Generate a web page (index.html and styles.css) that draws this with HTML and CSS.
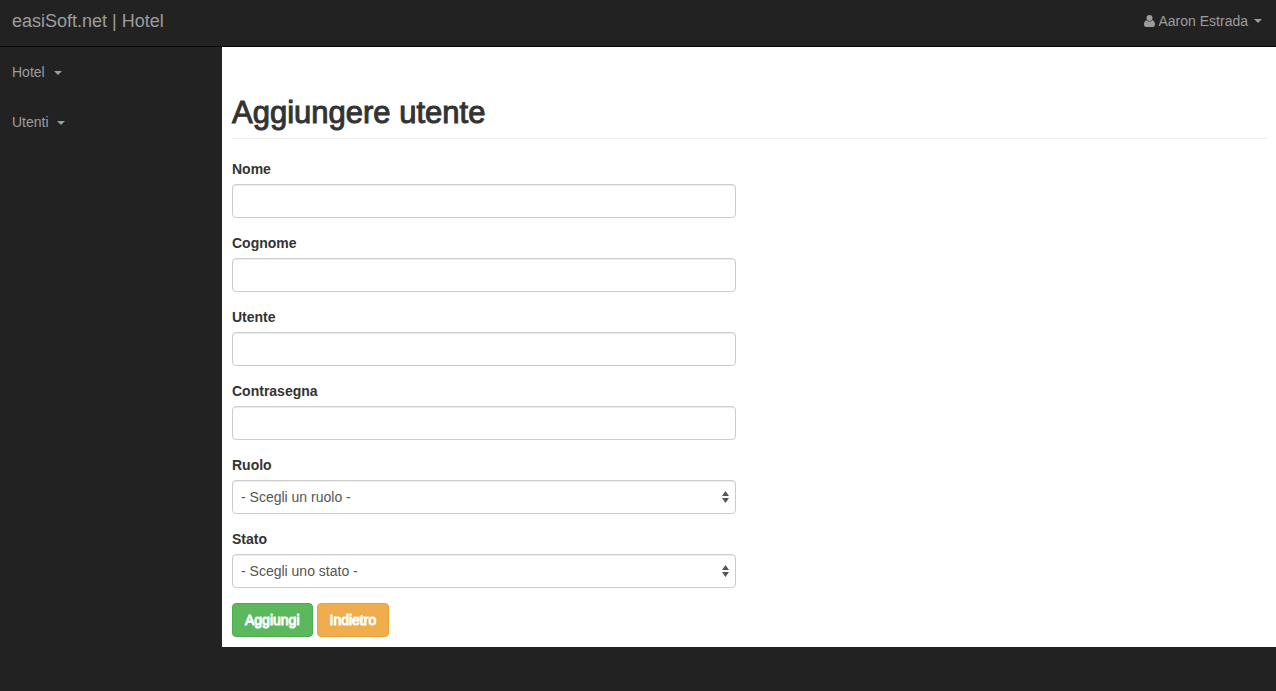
FILE: index.html
```html
<!DOCTYPE html>
<html lang="it">
<head>
<meta charset="utf-8">
<meta name="viewport" content="width=device-width, initial-scale=1">
<title>easiSoft.net | Hotel</title>
<link rel="stylesheet" href="styles.css">
</head>
<body>
<header class="navbar">
  <a class="brand" href="#">easiSoft.net | Hotel</a>
  <a class="user-menu" href="#">
    <svg class="user-icon" width="11" height="12" viewBox="0 0 11 12" aria-hidden="true"><circle cx="5.5" cy="3" r="3"/><path d="M2.6 5.2C.8 5.5 0 7.2 0 9.6 0 11.2 .9 12 2.2 12h6.600C10.100 12 11 11.200 11 9.600 11 7.200 10.200 5.500 8.400 5.200 7.700 6 6.700 6.500 5.500 6.500S3.300 6 2.600 5.200z"/></svg>
    <span>Aaron Estrada</span>
    <span class="caret"></span>
  </a>
</header>
<div class="layout">
  <nav class="sidebar">
    <a class="side-link" href="#">Hotel <span class="caret"></span></a>
    <a class="side-link" href="#">Utenti <span class="caret"></span></a>
  </nav>
  <main class="content">
    <h1 class="page-title">Aggiungere utente</h1>
    <form class="user-form">
      <div class="field"><label for="nome">Nome</label><input class="control" id="nome" type="text"></div>
      <div class="field"><label for="cognome">Cognome</label><input class="control" id="cognome" type="text"></div>
      <div class="field"><label for="utente">Utente</label><input class="control" id="utente" type="text"></div>
      <div class="field"><label for="contrasegna">Contrasegna</label><input class="control" id="contrasegna" type="password"></div>
      <div class="field">
        <label for="ruolo">Ruolo</label>
        <div class="select-box">
          <select class="control" id="ruolo"><option>- Scegli un ruolo -</option></select>
          <svg class="select-arrows" width="7" height="12" viewBox="0 0 7 12" aria-hidden="true"><path d="M3.5 0L7 5H0zM0 7h7l-3.500 5z"/></svg>
        </div>
      </div>
      <div class="field">
        <label for="stato">Stato</label>
        <div class="select-box">
          <select class="control" id="stato"><option>- Scegli uno stato -</option></select>
          <svg class="select-arrows" width="7" height="12" viewBox="0 0 7 12" aria-hidden="true"><path d="M3.5 0L7 5H0zM0 7h7l-3.500 5z"/></svg>
        </div>
      </div>
      <div class="actions">
        <button class="btn btn-success" type="submit">Aggiungi</button>
        <button class="btn btn-warning" type="button">Indietro</button>
      </div>
    </form>
  </main>
</div>
</body>
</html>
```

FILE: styles.css
```css
* { box-sizing: border-box; }

body {
  margin: 0;
  background: #222;
  color: #333;
  font: 14px/20px "Liberation Sans", Arial, sans-serif;
}

a { color: #9d9d9d; text-decoration: none; }

.navbar {
  display: flex;
  justify-content: space-between;
  padding: 11px 14px 15px 12px;
  border-bottom: 1px solid #080808;
}

.brand { font-size: 18px; }

.user-menu { display: flex; align-items: center; gap: 4px; }
.user-icon { fill: #9d9d9d; }

.caret {
  display: inline-block;
  margin-left: 2px;
  vertical-align: middle;
  border-top: 4px solid #9d9d9d;
  border-right: 4px solid transparent;
  border-left: 4px solid transparent;
}

.layout { display: flex; align-items: flex-start; }

.sidebar { flex: 0 0 222px; }

.side-link { display: block; padding: 15px 12px; }
.side-link .caret { margin-left: 5px; }

.content {
  flex: 1;
  min-width: 0;
  padding: 49px 9px 10px 10px;
  background: #fff;
}

.page-title {
  margin: 0 0 20px;
  padding-bottom: 9px;
  border-bottom: 1px solid #eee;
  font-size: 31px;
  font-weight: 500;
  line-height: 33px;
  -webkit-text-stroke: 1px #333;
}

.user-form { width: 50%; padding-right: 14px; }

.field { margin-bottom: 15px; }

.field label {
  display: block;
  margin-bottom: 5px;
  font-weight: 700;
}

.control {
  display: block;
  width: 100%;
  height: 34px;
  padding: 6px 12px;
  border: 1px solid #ccc;
  border-radius: 4px;
  background: #fff;
  box-shadow: inset 0 1px 1px rgba(0, 0, 0, .075);
  color: #555;
  font: inherit;
}

.select-box { position: relative; }
.select-box .control { appearance: none; padding: 6px 8px; }

.select-arrows {
  position: absolute;
  top: 11px;
  right: 7px;
  fill: #555;
  pointer-events: none;
}

.actions { display: flex; gap: 4px; }

.btn {
  padding: 6px 12px;
  border: 1px solid;
  border-radius: 4px;
  color: #fff;
  font: inherit;
  -webkit-text-stroke: 1px #fff;
}

.btn-success { background: #5cb85c; border-color: #4cae4c; }
.btn-warning { background: #f0ad4e; border-color: #eea236; }
```
